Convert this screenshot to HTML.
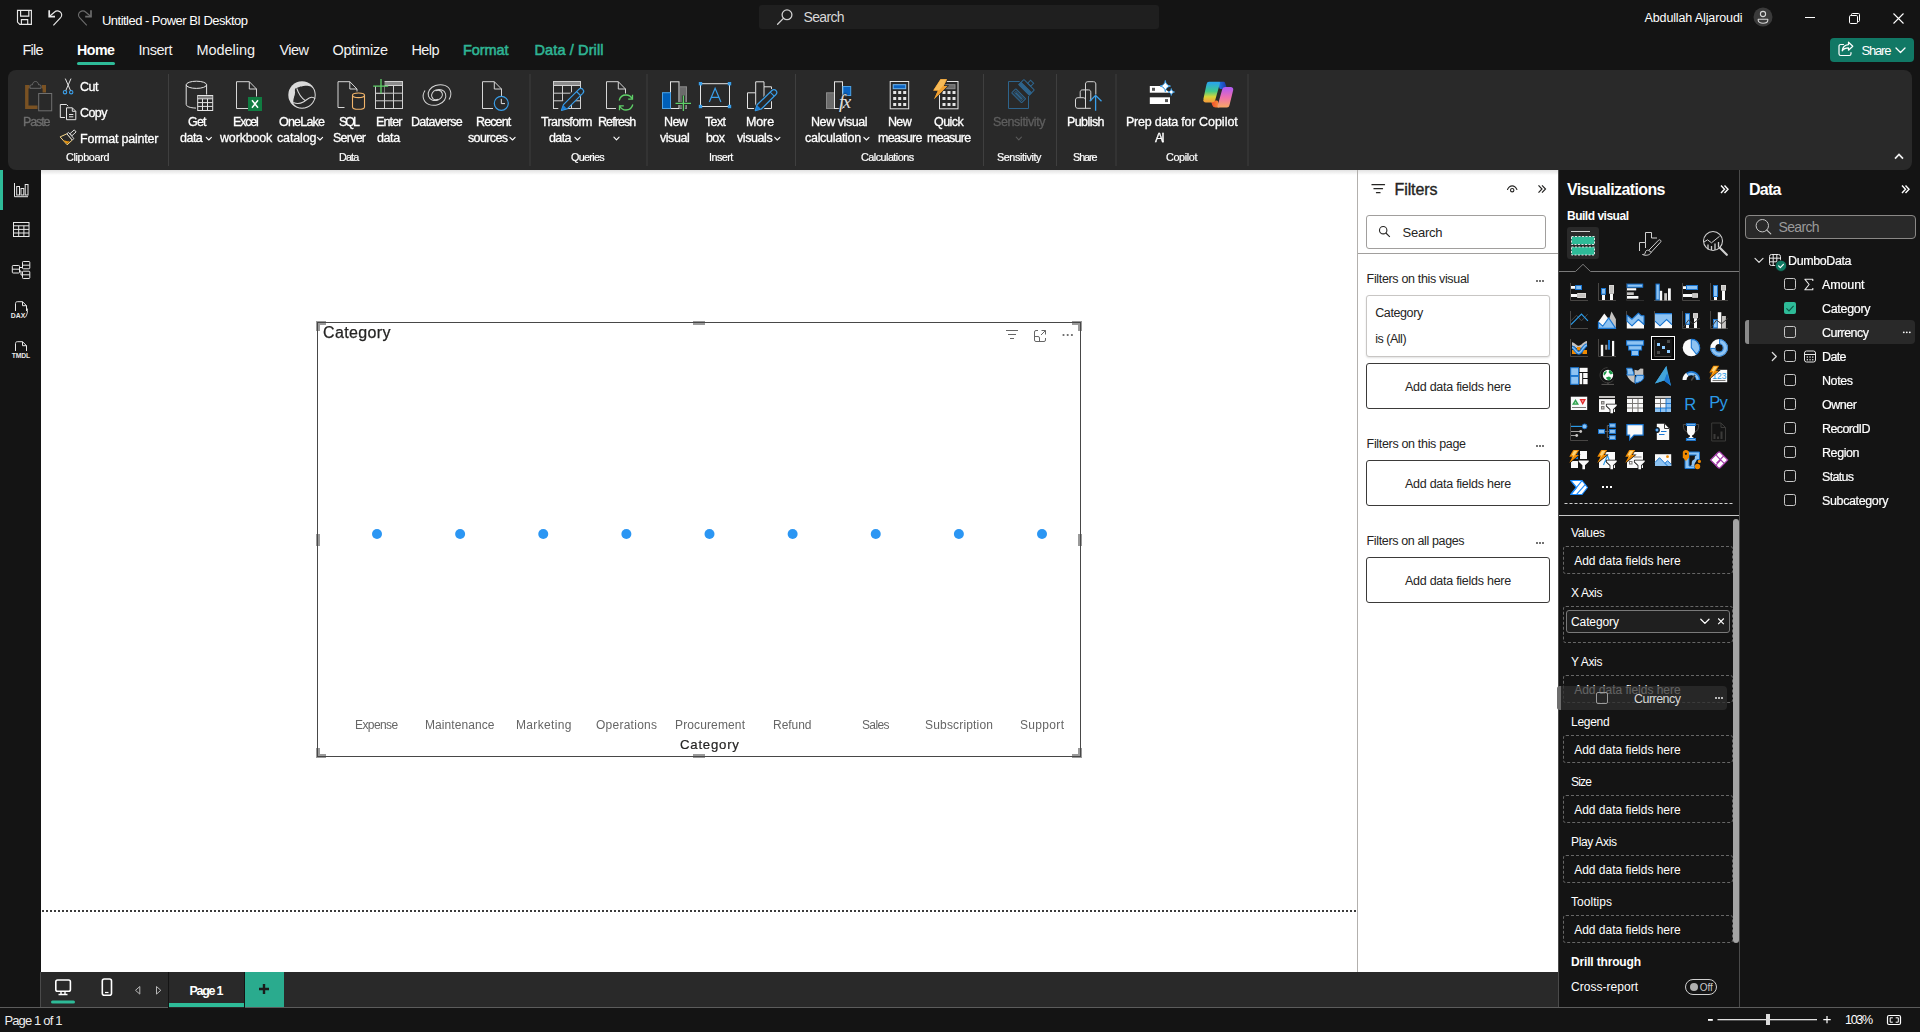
<!DOCTYPE html>
<html>
<head>
<meta charset="utf-8">
<title>Untitled - Power BI Desktop</title>
<style>
*{box-sizing:border-box;margin:0;padding:0}
html,body{width:1920px;height:1032px;overflow:hidden;background:#141414;font-family:"Liberation Sans",sans-serif;color:#fff}
.a{position:absolute}
.t{position:absolute;white-space:nowrap;line-height:1}
svg{position:absolute;overflow:visible}
</style>
</head>
<body>
<!-- p_layout -->
<div class="a" style="left:8px;top:70px;width:1904px;height:100px;background:#292929;border-radius:8px;"></div>
<div class="a" style="left:0px;top:170px;width:41px;height:838px;background:#141414;"></div>
<div class="a" style="left:41px;top:170px;width:1316px;height:802px;background:#fff;"></div>
<div class="a" style="left:1357px;top:170px;width:201px;height:802px;background:#fff;"></div>
<div class="a" style="left:1558px;top:170px;width:182px;height:838px;background:#141414;border-left:1px solid #4a4a4a;border-right:1px solid #4a4a4a;"></div>
<div class="a" style="left:1740px;top:170px;width:180px;height:838px;background:#141414;"></div>
<div class="a" style="left:41px;top:170px;width:1517px;height:5px;background:linear-gradient(#e2e2e2,#fff);"></div>
<div class="a" style="left:1357px;top:170px;width:1px;height:802px;background:#b3b0ad;"></div>
<div class="a" style="left:41px;top:972px;width:1517px;height:36px;background:#292929;"></div>
<div class="a" style="left:0px;top:1007px;width:1920px;height:1px;background:#5c5c5c;"></div>
<!-- p_title -->
<svg style="left:0px;top:0px;" width="110" height="34" viewBox="0 0 110 34"><path d="M17.500 10.400H31.400V24.400H19.800L17.500 22.100z M20.600 10.400V16.100H28.800V10.400 M21.400 24.400V19.600H27.700V24.400" fill="none" stroke="#e8e8e8" stroke-width="1.150" stroke-linejoin="miter"/><path d="M49.200 10.200V16.700H55" fill="none" stroke="#e8e8e8" stroke-width="1.700"/><path d="M49.600 16.300L54.300 12.200C56 10.700 58.300 10.600 60 11.800 62 13.300 62.300 15.800 60.600 17.700L53.400 25.300" fill="none" stroke="#e8e8e8" stroke-width="1.150"/><g transform="translate(140.200,0) scale(-1,1)"><path d="M49.200 10.200V16.700H55" fill="none" stroke="#6c6c6c" stroke-width="1.700"/><path d="M49.600 16.300L54.300 12.200C56 10.700 58.300 10.600 60 11.800 62 13.300 62.300 15.800 60.600 17.700L53.400 25.300" fill="none" stroke="#6c6c6c" stroke-width="1.150"/></g></svg>
<div class="t" style="left:102.00px;top:14.00px;font-size:13px;color:#fff;letter-spacing:-0.526px;">Untitled - Power BI Desktop</div>
<div class="a" style="left:759px;top:5px;width:400px;height:24px;background:#1f1f1f;border-radius:3px;"></div>
<svg style="left:776px;top:8px;" width="18" height="18" viewBox="0 0 18 18"><circle cx="11" cy="6.8" r="4.9" fill="none" stroke="#d0d0d0" stroke-width="1.3"/><path d="M7.4 10.4L1.6 16.2" stroke="#d0d0d0" stroke-width="1.3" stroke-linecap="round"/></svg>
<div class="t" style="left:803.50px;top:10.00px;font-size:14px;color:#d8d8d8;letter-spacing:-0.672px;">Search</div>
<div class="t" style="left:1644.50px;top:12.00px;font-size:12.5px;color:#fff;letter-spacing:-0.122px;">Abdullah Aljaroudi</div>
<svg style="left:1753px;top:7px;" width="20" height="20" viewBox="0 0 20 20"><circle cx="10" cy="10" r="9.5" fill="#3b3b3b"/><circle cx="10" cy="7" r="2.6" fill="none" stroke="#d6d6d6" stroke-width="1.1"/><path d="M5.2 12.2h9.6v1c0 1.800-2 3-4.800 3s-4.800-1.200-4.800-3z" fill="none" stroke="#d6d6d6" stroke-width="1.1" stroke-linejoin="round"/></svg>
<div class="a" style="left:1805px;top:17px;width:10px;height:1px;background:#fff;"></div>
<svg style="left:1848.5px;top:12.7px;" width="11" height="11" viewBox="0 0 11 11"><path d="M2.500 2.500V1.500a1 1 0 0 1 1-1h6a1 1 0 0 1 1 1v6a1 1 0 0 1-1 1h-1" fill="none" stroke="#fff" stroke-width="1"/><rect x=".5" y="2.500" width="8" height="8" rx="1.200" fill="none" stroke="#fff" stroke-width="1"/></svg>
<svg style="left:1892.8px;top:12.7px;" width="11" height="11" viewBox="0 0 11 11"><path d="M.5.5l10 10M10.500.5l-10 10" stroke="#fff" stroke-width="1.100"/></svg>
<div class="t" style="left:22.50px;top:43.00px;font-size:14.5px;color:#f2f2f2;letter-spacing:-0.788px;">File</div>
<div class="t" style="left:77.00px;top:43.00px;font-size:14.2px;color:#fff;letter-spacing:-0.484px;font-weight:bold;">Home</div>
<div class="t" style="left:138.50px;top:43.00px;font-size:14.5px;color:#f2f2f2;letter-spacing:-0.452px;">Insert</div>
<div class="t" style="left:196.50px;top:43.00px;font-size:14.5px;color:#f2f2f2;letter-spacing:-0.048px;">Modeling</div>
<div class="t" style="left:279.50px;top:43.00px;font-size:14.5px;color:#f2f2f2;letter-spacing:-0.556px;">View</div>
<div class="t" style="left:332.50px;top:43.00px;font-size:14.5px;color:#f2f2f2;letter-spacing:-0.243px;">Optimize</div>
<div class="t" style="left:411.50px;top:43.00px;font-size:14.5px;color:#f2f2f2;letter-spacing:-0.607px;">Help</div>
<div class="t" style="left:463.00px;top:43.00px;font-size:14.5px;color:#2fb595;letter-spacing:-0.083px;-webkit-text-stroke:.55px #2fb595;">Format</div>
<div class="t" style="left:534.50px;top:43.00px;font-size:14.5px;color:#2fb595;letter-spacing:0.120px;-webkit-text-stroke:.55px #2fb595;">Data / Drill</div>
<div class="a" style="left:77px;top:62px;width:38px;height:2.5px;background:#2ebb98;border-radius:1.500px;"></div>
<div class="a" style="left:1830px;top:38px;width:84px;height:24px;background:#117865;border-radius:4px;"></div>
<svg style="left:1837px;top:41px;" width="18" height="16" viewBox="0 0 18 16"><path d="M6.500 3.500H3.800A1.800 1.800 0 0 0 2 5.300v7.400a1.800 1.800 0 0 0 1.800 1.800h8.400a1.800 1.800 0 0 0 1.800-1.800V11.500" fill="none" stroke="#fff" stroke-width="1.200" stroke-linecap="round"/><path d="M11.500 1.200l4.300 4-4.300 4V6.800c-3.200 0-5 1-6.300 3 .3-3.300 2.300-5.800 6.300-6.200z" fill="none" stroke="#fff" stroke-width="1.200" stroke-linejoin="round"/></svg>
<div class="t" style="left:1861.50px;top:44.00px;font-size:13px;color:#fff;letter-spacing:-1.173px;">Share</div>
<svg style="left:1895px;top:47px;" width="11" height="7" viewBox="0 0 11 7"><path d="M1 1l4.500 4.500L10 1" fill="none" stroke="#fff" stroke-width="1.300" stroke-linecap="round" stroke-linejoin="round"/></svg>
<!-- p_ribbon -->
<svg style="left:0px;top:70px;" width="1920" height="100" viewBox="0 70 1920 100"><rect x="168" y="74" width="1" height="92" fill="#3f3f3f"/><rect x="529.5" y="74" width="1" height="92" fill="#3f3f3f"/><rect x="646.5" y="74" width="1" height="92" fill="#3f3f3f"/><rect x="795" y="74" width="1" height="92" fill="#3f3f3f"/><rect x="983" y="74" width="1" height="92" fill="#3f3f3f"/><rect x="1056" y="74" width="1" height="92" fill="#3f3f3f"/><rect x="1115.5" y="74" width="1" height="92" fill="#3f3f3f"/><rect x="1247.5" y="74" width="1" height="92" fill="#3f3f3f"/><path d="M29.500 86.700H26.800V107.200H37.500 M41.800 86.700H44.300V92.500" fill="none" stroke="#7a5223" stroke-width="3.400"/><path d="M30 88.300V86.200c0-.8.500-1.400 1.400-1.400h1c.3-1.900 1.300-3.300 3.100-3.300s2.800 1.400 3.100 3.300h1c.9 0 1.400.6 1.400 1.400v2.100z" fill="none" stroke="#6a6a6a" stroke-width="1"/><rect x="38.700" y="93.500" width="13" height="17.300" fill="#292929" stroke="#707070" stroke-width="1"/><path d="M65.300 78.600L70.800 91.200 M71 78.600L65.500 91.200" stroke="#e4e4e4" stroke-width="1" fill="none"/><circle cx="65" cy="92.200" r="1.700" fill="none" stroke="#3a9fea" stroke-width="1.100"/><circle cx="71.200" cy="92.200" r="1.700" fill="none" stroke="#3a9fea" stroke-width="1.100"/><path d="M65 117.500H60.300V104.500H66.500L68.200 106.200" fill="none" stroke="#e4e4e4" stroke-width="1"/><path d="M66.500 107.800H72.300L75.800 111.300V119.700H66.500z M72.300 107.800V111.300H75.800" fill="#292929" stroke="#e4e4e4" stroke-width="1" stroke-linejoin="round"/><path d="M69 114.500h4.300M69 116.800h4.300" stroke="#e4e4e4" stroke-width="1"/><path d="M60.100 136.900L66.900 133.800 72.300 140 67.200 144.800z" fill="#292929" stroke="#f8d88a" stroke-width="1" stroke-linejoin="round"/><path d="M62.800 139.900C65 140.300 67 141.600 69.800 141.300L67.200 144z" fill="#e8930c"/><path d="M70.060 133.660L71.940 135.740 76.140 131.940 74.260 129.860z" fill="#292929" stroke="#dcdcdc" stroke-width="1" stroke-linejoin="round"/><path d="M66.900 133.800L72.300 140 73.900 138.600 68.500 132.400z" fill="#292929" stroke="#dcdcdc" stroke-width="1" stroke-linejoin="round"/><ellipse cx="196.400" cy="84.800" rx="10.200" ry="3.600" fill="none" stroke="#e4e4e4" stroke-width="1"/><path d="M186.200 84.800V104.400c0 2 3.800 3.500 9.800 3.700 M206.600 84.800V94.500" fill="none" stroke="#e4e4e4" stroke-width="1"/><rect x="197.700" y="95.500" width="15" height="15" fill="#292929" stroke="#e4e4e4" stroke-width="1"/><rect x="198.200" y="96" width="14" height="2.300" fill="#7c7c7c"/><path d="M197.700 98.800h15M197.700 102.600h15M197.700 106.400h15M202.500 98.800v11.700M207.500 98.800v11.700" stroke="#e4e4e4" stroke-width="1"/><path d="M248 108.500H236.500V81.700H249.300L256.500 89V96.500 M249.300 81.700V89H256.500" fill="none" stroke="#d6d6d6" stroke-width="1"/><rect x="248" y="97" width="14" height="14" fill="#107c41"/><path d="M252 100.200l6 7.600M258 100.200l-6 7.600" stroke="#fff" stroke-width="1.500"/><circle cx="302" cy="95" r="13.700" fill="#dadada"/><path d="M314.7 95.0 L314.6 96.3 L314.4 97.6 L314.1 98.9 L313.6 100.2 L313.0 101.3 L312.3 102.5 L311.4 103.5 L310.5 104.4 L309.5 105.3 L308.4 106.0 L307.2 106.6 L305.9 107.1 L304.6 107.4 L303.3 107.6 L302.0 107.7 L300.7 107.6 L299.4 107.4 L298.1 107.1 L296.9 106.5 L295.8 105.8 L294.8 104.9 L293.9 104.0 L293.4 102.8 L293.3 101.3 L293.4 100.0 L293.6 98.7 L294.0 97.6 L294.1 96.7 L294.4 95.8 L294.8 95.0 L294.8 94.2 L294.9 93.5 L295.1 92.7 L295.0 91.9 L294.9 90.9 L294.9 89.9 L295.1 88.8 L295.9 88.3 L296.8 87.9 L297.7 87.6 L298.5 87.2 L299.4 86.9 L300.2 86.6 L301.1 86.5 L302.0 86.5 L302.9 86.1 L303.9 85.9 L305.0 85.8 L306.1 85.7 L307.4 85.7 L308.6 85.9 L310.0 86.2 L311.1 86.8 L312.1 87.7 L313.0 88.6 L313.6 89.8 L314.1 91.1 L314.4 92.4 L314.6 93.7z" fill="#292929"/><path d="M296.800 88.300C298.500 93.500 301.300 97.800 305.300 100.600" fill="none" stroke="#dadada" stroke-width="1.100"/><path d="M293.300 102.600C296.500 103.800 300.300 103.700 303.300 102 306.300 100.300 308.500 97.500 311.500 97.300 313 97.200 314.200 97.800 315 98.800" fill="none" stroke="#dadada" stroke-width="1.100"/><path d="M336 107.500H329.500V81.700H341.300L348.500 89V91.500 M341.300 81.700V89H348.500" fill="none" stroke="#d6d6d6" stroke-width="1" transform="translate(8.500,0)"/><ellipse cx="358.500" cy="95.300" rx="6" ry="2.300" fill="#292929" stroke="#f2b56b" stroke-width="1.100"/><path d="M352.500 95.300V107c0 1.300 2.700 2.300 6 2.300s6-1 6-2.300V95.300" fill="none" stroke="#f2b56b" stroke-width="1.100"/><rect x="375.500" y="81.500" width="27" height="27" fill="none" stroke="#d0d0d0" stroke-width="1"/><rect x="384" y="82" width="18" height="3" fill="#8a8a8a"/><path d="M375.500 85.500h27M375.500 93.200h27M375.500 100.800h27M384.500 85.500v23M393.500 85.500v23" stroke="#d0d0d0" stroke-width="1" fill="none"/><rect x="373" y="79" width="11.500" height="14" fill="#292929"/><path d="M375.500 93.200v-7M375.500 93.200h9" stroke="#d0d0d0" stroke-width="1"/><path d="M381 79v14.500M373.200 86.200h15" stroke="#5fd068" stroke-width="1.300"/><g transform="rotate(-18 437 95)" fill="none" stroke="#d6d6d6" stroke-width="1"><path d="M437 99.500c-3.500 0-5.500-2-5.500-4.500s2.500-5 6-5c4.500 0 8 2.700 8 6.500 0 4.500-4.500 8-10 8-7 0-12.500-4-12.500-10 0-3 1.500-5.500 4-7.500"/><path d="M437 90.500c3.500 0 5.500 2 5.500 4.500s-2.500 5-6 5c-4.500 0-8-2.700-8-6.500 0-4.500 4.500-8 10-8 7 0 12.500 4 12.500 10 0 3-1.500 5.500-4 7.500"/></g><path d="M493 108.500H482.500V81.700H494.300L501.500 89V96 M494.300 81.700V89H501.500" fill="none" stroke="#d6d6d6" stroke-width="1"/><circle cx="501.300" cy="103.300" r="7" fill="#292929" stroke="#3a9fea" stroke-width="1.200"/><path d="M501.300 98.800v4.800h3.700" fill="none" stroke="#e4e4e4" stroke-width="1"/><rect x="553.500" y="81.500" width="27" height="27" fill="none" stroke="#d0d0d0" stroke-width="1"/><rect x="554" y="82" width="26" height="3" fill="#8a8a8a"/><path d="M553.500 85.500h27M553.500 93.200h27M553.500 100.800h27M562.500 85.500v23M571.500 85.500v23" stroke="#d0d0d0" stroke-width="1" fill="none"/><path d="M559 111l2.300-6.500 15-15 4.200 4.200-15 15z" fill="#292929" stroke="#292929" stroke-width="3"/><path d="M561.500 110.300l2-5.700 15.300-15.300c1.200-1.200 2.900-1.200 4 0 1.100 1.100 1.100 2.800 0 4L567.500 108.600z" fill="#292929" stroke="#3a9fea" stroke-width="1.200" stroke-linejoin="round"/><path d="M561.500 110.300l1.800-5.200 3.600 3.600z" fill="#1f7fd4"/><path d="M576.500 91.500l4 4" stroke="#3a9fea" stroke-width="1.100"/><path d="M616 108.500H606.500V81.700H618.300L625.500 89V93.500 M618.300 81.700V89H625.500" fill="none" stroke="#d6d6d6" stroke-width="1"/><path d="M619.200 100.500c.8-3.300 3.600-5.500 6.800-5.500 2.700 0 5 1.500 6.200 3.800 M632.800 104.500c-.8 3.300-3.600 5.500-6.800 5.500-2.700 0-5-1.500-6.200-3.800" fill="none" stroke="#5fd068" stroke-width="1.300"/><path d="M632.500 94.800v4.300h-4.300M619.500 110.200v-4.300h4.300" fill="none" stroke="#5fd068" stroke-width="1.300"/><path d="M613.90 137.20l2.6 2.6 2.6-2.6" fill="none" stroke="#fff" stroke-width="1.1" stroke-linecap="round" stroke-linejoin="round"/><rect x="670.500" y="81.800" width="8.500" height="26.700" fill="none" stroke="#e4e4e4" stroke-width="1"/><rect x="679.500" y="86.800" width="7" height="21.700" fill="#6b6b6b" stroke="#8a8a8a" stroke-width="1"/><rect x="662.500" y="92.700" width="8" height="15.800" fill="#005fb8" stroke="#4ba3e8" stroke-width="1"/><path d="M683.400 95.500v15.500M675.500 103.400h15.500" stroke="#292929" stroke-width="3"/><path d="M683.400 95.500v15.500M675.500 103.400h15.500" stroke="#5fd068" stroke-width="1.300"/><rect x="700.500" y="83.700" width="29" height="22.800" fill="none" stroke="#e4e4e4" stroke-width="1"/><rect x="698.8" y="82" width="3.400" height="3.400" fill="#3a9fea"/><rect x="727.8" y="82" width="3.400" height="3.400" fill="#3a9fea"/><rect x="698.8" y="104.8" width="3.400" height="3.400" fill="#3a9fea"/><rect x="727.8" y="104.8" width="3.400" height="3.400" fill="#3a9fea"/><path d="M709.300 102l5.800-13.800 5.800 13.800M711.300 97.300h7.600" fill="none" stroke="#3a9fea" stroke-width="1.200"/><path d="M747.500 108.500V92.800H755.700V81.800H764V86.800H771.500V108.500z M755.700 92.800V108.500 M764 86.800V108.500" fill="none" stroke="#e4e4e4" stroke-width="1"/><path d="M754 112.500l2.500-7 15-15 4.500 4.500-15 15z" fill="#292929" stroke="#292929" stroke-width="2.500"/><path d="M755.300 110.700l1.800-5.900 14.800-14.300c1.200-1.200 2.900-1.200 4 0 1.100 1.100 1.100 2.800 0 4L761.300 109z" fill="#292929" stroke="#3a9fea" stroke-width="1.200" stroke-linejoin="round"/><path d="M755.300 110.700l1.800-5.500 3.800 3.600z" fill="#1f7fd4"/><path d="M770.200 92.200l4 4" stroke="#3a9fea" stroke-width="1.100"/><rect x="826.500" y="92.800" width="8" height="15.700" fill="#6b6b6b" stroke="#8a8a8a" stroke-width="1"/><rect x="834.500" y="81.800" width="8" height="26.700" fill="none" stroke="#e4e4e4" stroke-width="1"/><rect x="843" y="86.500" width="7.700" height="9" fill="#0a63c2" stroke="#4ba3e8" stroke-width="1"/><rect x="840" y="93" width="14" height="17" fill="#292929" opacity="0"/><rect x="890.2" y="81.500" width="18.500" height="27.300" fill="none" stroke="#e4e4e4" stroke-width="1"/><rect x="893.2" y="84.700" width="12.500" height="4" fill="#0a63c2" stroke="#6db6f2" stroke-width="1"/><rect x="893.2" y="91" width="3" height="3" fill="#e4e4e4"/><rect x="893.2" y="97" width="3" height="3" fill="#e4e4e4"/><rect x="893.2" y="103" width="3" height="3" fill="#e4e4e4"/><rect x="898.2" y="91" width="3" height="3" fill="#e4e4e4"/><rect x="898.2" y="97" width="3" height="3" fill="#e4e4e4"/><rect x="898.2" y="103" width="3" height="3" fill="#e4e4e4"/><rect x="903.2" y="91" width="3" height="3" fill="#e4e4e4"/><rect x="903.2" y="97" width="3" height="3" fill="#e4e4e4"/><rect x="903.2" y="103" width="3" height="3" fill="#e4e4e4"/><rect x="939.5" y="81.500" width="18.500" height="27.300" fill="none" stroke="#e4e4e4" stroke-width="1"/><rect x="942.5" y="84.700" width="12.500" height="4" fill="#6b6b6b" stroke="#8a8a8a" stroke-width="1"/><rect x="942.5" y="91" width="3" height="3" fill="#e4e4e4"/><rect x="942.5" y="97" width="3" height="3" fill="#e4e4e4"/><rect x="942.5" y="103" width="3" height="3" fill="#e4e4e4"/><rect x="947.5" y="91" width="3" height="3" fill="#e4e4e4"/><rect x="947.5" y="97" width="3" height="3" fill="#e4e4e4"/><rect x="947.5" y="103" width="3" height="3" fill="#e4e4e4"/><rect x="952.5" y="91" width="3" height="3" fill="#e4e4e4"/><rect x="952.5" y="97" width="3" height="3" fill="#e4e4e4"/><rect x="952.5" y="103" width="3" height="3" fill="#e4e4e4"/><path d="M940.500 79.200h6.500l-3.300 6.800h3.700L934 99.300l4-8.800h-4.800z" fill="#f0a030" stroke="#292929" stroke-width="1.600" paint-order="stroke"/><path d="M940.500 79.200h6.500l-3.300 6.800h3.700L934 99.300l4-8.800h-4.800z" fill="#f0a030"/><path d="M940.700 79.600h5.500l-2.600 5.600-4.500 5h-5.200z" fill="#fcd27a" opacity=".55"/><path d="M1019.700 81.500H1008.500V108.500H1028.500V96" fill="none" stroke="#2e648c" stroke-width="1"/><g transform="translate(1018.700,95.800) rotate(45)" fill="none" stroke="#2e648c" stroke-width="1"><rect x="-7" y="-2.900" width="14" height="5.800" rx=".6"/><rect x="-4.600" y="-.9" width="9.200" height="1.800" fill="#2e648c" stroke="none"/><rect x="-5.400" y="-1.700" width="10.800" height="3.400" stroke-width=".7"/></g><g transform="translate(1026.600,87.300) rotate(45)" fill="none" stroke="#2e648c" stroke-width="1"><rect x="-7.400" y="-3.600" width="14.800" height="7.200" rx=".6"/><rect x="-7.400" y=".4" width="14.800" height="3.200" fill="#2e648c"/><rect x="-2.200" y="-7.800" width="4.400" height="4.200"/></g><path d="M1016.20 137.20l2.6 2.6 2.6-2.6" fill="none" stroke="#5a5a5a" stroke-width="1.1" stroke-linecap="round" stroke-linejoin="round"/><path d="M1085.500 108.300V84c0-1.400.9-2.300 2.300-2.300h5.700c1.400 0 2.300.9 2.300 2.300V94.500" fill="none" stroke="#d6d6d6" stroke-width="1"/><path d="M1080.200 97.500V92.200c0-1.400.9-2.300 2.300-2.300h6c1.400 0 2.300.9 2.300 2.300V101" fill="none" stroke="#d6d6d6" stroke-width="1"/><path d="M1090.800 108.300H1077.800c-1.400 0-2.300-.9-2.300-2.300V100c0-1.400.9-2.300 2.300-2.300h5.400c1.400 0 2.300.9 2.300 2.300" fill="none" stroke="#d6d6d6" stroke-width="1"/><path d="M1095.600 110.800V95.500M1089.700 101.300l5.900-5.900 5.900 5.900" fill="none" stroke="#3a9fea" stroke-width="1.300"/><rect x="1149.800" y="86" width="20.200" height="6.700" fill="#fff"/><rect x="1149.800" y="97.300" width="20.200" height="6.700" fill="#fff"/><rect x="1152" y="87.800" width="3" height="3" fill="#555"/><rect x="1165" y="99.100" width="3" height="3" fill="#555"/><path d="M1160.500 85.500l11 8.500v-9z" fill="#292929"/><path d="M1165.300 80.500c.5 3.300 1.800 4.800 5.200 5.600-3.400.8-4.700 2.300-5.200 5.600-.5-3.300-1.800-4.800-5.200-5.600 3.400-.8 4.700-2.300 5.200-5.600z" fill="#fff" stroke="#3a9fea" stroke-width="1"/><path d="M1171.300 88.600c.3 2 1.100 2.900 3.200 3.400-2.100.5-2.900 1.400-3.200 3.400-.3-2-1.100-2.900-3.200-3.400 2.100-.5 2.900-1.400 3.200-3.400z" fill="#fff" stroke="#3a9fea" stroke-width=".9"/><defs>
<linearGradient id="cg1" x1="0" y1="0" x2="0" y2="1"><stop offset="0" stop-color="#2aa6e8"/><stop offset=".45" stop-color="#41c98a"/><stop offset=".75" stop-color="#d7d43a"/><stop offset="1" stop-color="#f2a23a"/></linearGradient>
<linearGradient id="cg2" x1="0" y1="0" x2="0" y2="1"><stop offset="0" stop-color="#b45cf0"/><stop offset=".5" stop-color="#ee6fb0"/><stop offset="1" stop-color="#f6a26a"/></linearGradient>
<linearGradient id="cg3" x1="0" y1="0" x2="1" y2="0"><stop offset="0" stop-color="#1f6fe0"/><stop offset="1" stop-color="#1c3fb0"/></linearGradient>
<linearGradient id="cg4" x1="0" y1="0" x2="1" y2="0"><stop offset="0" stop-color="#f0562e"/><stop offset="1" stop-color="#f78a3a"/></linearGradient>
</defs><path d="M1219.500 83h4.300l1.700 4.800h-5z" fill="url(#cg3)" stroke="url(#cg3)" stroke-width="2.400" stroke-linejoin="round"/><path d="M1212.500 101.700h4.300l1.700 4.700h-2.800c-1.200 0-2-.6-2.400-1.800z" fill="url(#cg4)" stroke="url(#cg4)" stroke-width="2.400" stroke-linejoin="round"/><path d="M1209 83h9.800l-4.700 16.800c-.3 1-1 1.500-2 1.500h-6.300c-1 0-1.600-.8-1.300-1.800l3.200-15c.2-1 .6-1.500 1.300-1.500z" fill="url(#cg1)" stroke="url(#cg1)" stroke-width="2.400" stroke-linejoin="round"/><path d="M1227 106.400h-8.300l4.700-16.800c.3-1 1-1.500 2-1.500h5.300c1 0 1.600.8 1.300 1.800l-3.700 15c-.2 1-.6 1.500-1.300 1.500z" fill="url(#cg2)" stroke="url(#cg2)" stroke-width="2.400" stroke-linejoin="round"/></svg>
<div class="t" style="left:839px;top:91.500px;font-family:'Liberation Serif',serif;font-style:italic;font-size:19px;color:#e0e0e0;letter-spacing:-1.500px;text-shadow:0 0 1.500px #292929,0 0 1.500px #292929,0 0 2px #292929">fx</div>
<div class="t" style="left:22.50px;top:116.00px;font-size:12.5px;color:#6e6e6e;letter-spacing:-1.116px;will-change:transform;-webkit-text-stroke:.3px #6e6e6e;">Paste</div>
<div class="t" style="left:80.00px;top:81.00px;font-size:12.5px;color:#fff;letter-spacing:-0.477px;will-change:transform;-webkit-text-stroke:.3px #fff;">Cut</div>
<div class="t" style="left:80.00px;top:107.00px;font-size:12.5px;color:#fff;letter-spacing:-0.561px;will-change:transform;-webkit-text-stroke:.3px #fff;">Copy</div>
<div class="t" style="left:80.00px;top:133.00px;font-size:12.5px;color:#fff;letter-spacing:-0.230px;will-change:transform;-webkit-text-stroke:.3px #fff;">Format painter</div>
<div class="t" style="left:188.00px;top:116.00px;font-size:12.5px;color:#fff;letter-spacing:-0.824px;will-change:transform;-webkit-text-stroke:.3px #fff;">Get</div>
<div class="t" style="left:179.70px;top:132.00px;font-size:12.5px;color:#fff;letter-spacing:-0.511px;will-change:transform;-webkit-text-stroke:.3px #fff;">data</div>
<div class="t" style="left:233.00px;top:116.00px;font-size:12.5px;color:#fff;letter-spacing:-1.192px;will-change:transform;-webkit-text-stroke:.3px #fff;">Excel</div>
<div class="t" style="left:219.70px;top:132.00px;font-size:12.5px;color:#fff;letter-spacing:-0.172px;will-change:transform;-webkit-text-stroke:.3px #fff;">workbook</div>
<div class="t" style="left:278.50px;top:116.00px;font-size:12.5px;color:#fff;letter-spacing:-0.790px;will-change:transform;-webkit-text-stroke:.3px #fff;">OneLake</div>
<div class="t" style="left:276.50px;top:132.00px;font-size:12.5px;color:#fff;letter-spacing:-0.135px;will-change:transform;-webkit-text-stroke:.3px #fff;">catalog</div>
<div class="t" style="left:338.50px;top:116.00px;font-size:12.5px;color:#fff;letter-spacing:-2.006px;will-change:transform;-webkit-text-stroke:.3px #fff;">SQL</div>
<div class="t" style="left:332.50px;top:132.00px;font-size:12.5px;color:#fff;letter-spacing:-0.764px;will-change:transform;-webkit-text-stroke:.3px #fff;">Server</div>
<div class="t" style="left:376.00px;top:116.00px;font-size:12.5px;color:#fff;letter-spacing:-0.845px;will-change:transform;-webkit-text-stroke:.3px #fff;">Enter</div>
<div class="t" style="left:377.20px;top:132.00px;font-size:12.5px;color:#fff;letter-spacing:-0.411px;will-change:transform;-webkit-text-stroke:.3px #fff;">data</div>
<div class="t" style="left:411.30px;top:116.00px;font-size:12.5px;color:#fff;letter-spacing:-0.660px;will-change:transform;-webkit-text-stroke:.3px #fff;">Dataverse</div>
<div class="t" style="left:476.00px;top:116.00px;font-size:12.5px;color:#fff;letter-spacing:-0.882px;will-change:transform;-webkit-text-stroke:.3px #fff;">Recent</div>
<div class="t" style="left:467.50px;top:132.00px;font-size:12.5px;color:#fff;letter-spacing:-0.629px;will-change:transform;-webkit-text-stroke:.3px #fff;">sources</div>
<div class="t" style="left:541.00px;top:116.00px;font-size:12.5px;color:#fff;letter-spacing:-0.625px;will-change:transform;-webkit-text-stroke:.3px #fff;">Transform</div>
<div class="t" style="left:549.20px;top:132.00px;font-size:12.5px;color:#fff;letter-spacing:-0.611px;will-change:transform;-webkit-text-stroke:.3px #fff;">data</div>
<div class="t" style="left:597.50px;top:116.00px;font-size:12.5px;color:#fff;letter-spacing:-0.912px;will-change:transform;-webkit-text-stroke:.3px #fff;">Refresh</div>
<div class="t" style="left:663.50px;top:116.00px;font-size:12.5px;color:#fff;letter-spacing:-0.604px;will-change:transform;-webkit-text-stroke:.3px #fff;">New</div>
<div class="t" style="left:660.30px;top:132.00px;font-size:12.5px;color:#fff;letter-spacing:-0.452px;will-change:transform;-webkit-text-stroke:.3px #fff;">visual</div>
<div class="t" style="left:704.70px;top:116.00px;font-size:12.5px;color:#fff;letter-spacing:-0.642px;will-change:transform;-webkit-text-stroke:.3px #fff;">Text</div>
<div class="t" style="left:706.00px;top:132.00px;font-size:12.5px;color:#fff;letter-spacing:-0.578px;will-change:transform;-webkit-text-stroke:.3px #fff;">box</div>
<div class="t" style="left:746.20px;top:116.00px;font-size:12.5px;color:#fff;letter-spacing:-0.128px;will-change:transform;-webkit-text-stroke:.3px #fff;">More</div>
<div class="t" style="left:736.70px;top:132.00px;font-size:12.5px;color:#fff;letter-spacing:-0.418px;will-change:transform;-webkit-text-stroke:.3px #fff;">visuals</div>
<div class="t" style="left:810.80px;top:116.00px;font-size:12.5px;color:#fff;letter-spacing:-0.427px;will-change:transform;-webkit-text-stroke:.3px #fff;">New visual</div>
<div class="t" style="left:804.80px;top:132.00px;font-size:12.5px;color:#fff;letter-spacing:-0.287px;will-change:transform;-webkit-text-stroke:.3px #fff;">calculation</div>
<div class="t" style="left:888.00px;top:116.00px;font-size:12.5px;color:#fff;letter-spacing:-0.654px;will-change:transform;-webkit-text-stroke:.3px #fff;">New</div>
<div class="t" style="left:878.00px;top:132.00px;font-size:12.5px;color:#fff;letter-spacing:-0.707px;will-change:transform;-webkit-text-stroke:.3px #fff;">measure</div>
<div class="t" style="left:934.30px;top:116.00px;font-size:12.5px;color:#fff;letter-spacing:-0.563px;will-change:transform;-webkit-text-stroke:.3px #fff;">Quick</div>
<div class="t" style="left:926.80px;top:132.00px;font-size:12.5px;color:#fff;letter-spacing:-0.740px;will-change:transform;-webkit-text-stroke:.3px #fff;">measure</div>
<div class="t" style="left:993.00px;top:116.00px;font-size:12.5px;color:#5e5e5e;letter-spacing:-0.377px;will-change:transform;-webkit-text-stroke:.3px #5e5e5e;">Sensitivity</div>
<div class="t" style="left:1067.00px;top:116.00px;font-size:12.5px;color:#fff;letter-spacing:-0.583px;will-change:transform;-webkit-text-stroke:.3px #fff;">Publish</div>
<div class="t" style="left:1125.50px;top:116.00px;font-size:12.5px;color:#fff;letter-spacing:-0.248px;will-change:transform;-webkit-text-stroke:.3px #fff;">Prep data for</div>
<div class="t" style="left:1198.70px;top:116.00px;font-size:12.5px;color:#fff;letter-spacing:-0.019px;will-change:transform;-webkit-text-stroke:.3px #fff;">Copilot</div>
<div class="t" style="left:1155.20px;top:132.00px;font-size:12.5px;color:#fff;letter-spacing:-2.009px;will-change:transform;-webkit-text-stroke:.3px #fff;">AI</div>
<svg style="left:0px;top:70px;" width="1920" height="100" viewBox="0 70 1920 100"><path d="M206.20 137.40l2.6 2.6 2.6-2.6" fill="none" stroke="#fff" stroke-width="1.1" stroke-linecap="round" stroke-linejoin="round"/><path d="M317.40 137.40l2.6 2.6 2.6-2.6" fill="none" stroke="#fff" stroke-width="1.1" stroke-linecap="round" stroke-linejoin="round"/><path d="M509.90 137.40l2.6 2.6 2.6-2.6" fill="none" stroke="#fff" stroke-width="1.1" stroke-linecap="round" stroke-linejoin="round"/><path d="M574.90 137.40l2.6 2.6 2.6-2.6" fill="none" stroke="#fff" stroke-width="1.1" stroke-linecap="round" stroke-linejoin="round"/><path d="M774.70 137.40l2.6 2.6 2.6-2.6" fill="none" stroke="#fff" stroke-width="1.1" stroke-linecap="round" stroke-linejoin="round"/><path d="M863.80 137.40l2.6 2.6 2.6-2.6" fill="none" stroke="#fff" stroke-width="1.1" stroke-linecap="round" stroke-linejoin="round"/></svg>
<div class="t" style="left:66.30px;top:152.00px;font-size:10.8px;color:#fff;letter-spacing:-0.354px;will-change:transform;-webkit-text-stroke:.2px #fff;">Clipboard</div>
<div class="t" style="left:339.20px;top:152.00px;font-size:10.8px;color:#fff;letter-spacing:-0.839px;will-change:transform;-webkit-text-stroke:.2px #fff;">Data</div>
<div class="t" style="left:571.30px;top:152.00px;font-size:10.8px;color:#fff;letter-spacing:-0.687px;will-change:transform;-webkit-text-stroke:.2px #fff;">Queries</div>
<div class="t" style="left:708.60px;top:152.00px;font-size:10.8px;color:#fff;letter-spacing:-0.563px;will-change:transform;-webkit-text-stroke:.2px #fff;">Insert</div>
<div class="t" style="left:861.40px;top:152.00px;font-size:10.8px;color:#fff;letter-spacing:-0.521px;will-change:transform;-webkit-text-stroke:.2px #fff;">Calculations</div>
<div class="t" style="left:996.80px;top:152.00px;font-size:10.8px;color:#fff;letter-spacing:-0.422px;will-change:transform;-webkit-text-stroke:.2px #fff;">Sensitivity</div>
<div class="t" style="left:1073.20px;top:152.00px;font-size:10.8px;color:#fff;letter-spacing:-1.056px;will-change:transform;-webkit-text-stroke:.2px #fff;">Share</div>
<div class="t" style="left:1166.00px;top:152.00px;font-size:10.8px;color:#fff;letter-spacing:-0.353px;will-change:transform;-webkit-text-stroke:.2px #fff;">Copilot</div>
<svg style="left:1893.8px;top:152.6px;" width="10" height="7" viewBox="0 0 10 7"><path d="M1 5.700l4-4.200 4 4.200" fill="none" stroke="#f0f0f0" stroke-width="1.700" stroke-linecap="butt" stroke-linejoin="miter"/></svg>
<!-- p_nav -->
<div class="a" style="left:0px;top:170px;width:3px;height:40px;background:#2ebb98;"></div>
<svg style="left:0px;top:170px;" width="41" height="200" viewBox="0 170 41 200"><path d="M14.500 183v13.700h13.500" fill="none" stroke="#e8e8e8" stroke-width="1"/><rect x="16.700" y="186.500" width="2.800" height="8.500" fill="none" stroke="#e8e8e8" stroke-width="1"/><rect x="21" y="188.500" width="2.800" height="6.500" fill="none" stroke="#e8e8e8" stroke-width="1"/><rect x="25.200" y="184.500" width="2.800" height="10.500" fill="none" stroke="#e8e8e8" stroke-width="1"/><rect x="13.500" y="222.500" width="15.500" height="14" fill="none" stroke="#e8e8e8" stroke-width="1"/><path d="M13.500 225.800h15.500M13.500 229.400h15.500M13.500 233h15.500M18.700 225.800v10.700M23.900 225.800v10.700" stroke="#e8e8e8" stroke-width="1" fill="none"/><rect x="12.300" y="265.500" width="7.200" height="7.500" rx=".8" fill="none" stroke="#e8e8e8" stroke-width="1"/><path d="M12.300 269.200h7.200" stroke="#e8e8e8" stroke-width="1"/><rect x="22.500" y="261.500" width="7.300" height="7.300" rx=".8" fill="none" stroke="#e8e8e8" stroke-width="1"/><path d="M22.500 265.200h7.300" stroke="#e8e8e8" stroke-width="1"/><rect x="22.500" y="271.200" width="7.300" height="7.300" rx=".8" fill="none" stroke="#e8e8e8" stroke-width="1"/><path d="M22.500 274.800h7.300" stroke="#e8e8e8" stroke-width="1"/><path d="M19.500 267.500h3M19.500 271h1.500v4h1.500" fill="none" stroke="#e8e8e8" stroke-width="1"/><path d="M15.500 311v-7.500c0-1.100.7-1.800 1.800-1.800h5.200l4 4v5.300 M22.500 301.700v4h4" fill="none" stroke="#e8e8e8" stroke-width="1"/><path d="M27.300 308.500c.6 3-.2 6-1.800 8.600" fill="none" stroke="#e8e8e8" stroke-width=".9"/><path d="M15.500 351v-7.500c0-1.100.7-1.800 1.800-1.800h5.200l4 4v5.300 M22.500 341.700v4h4" fill="none" stroke="#e8e8e8" stroke-width="1"/></svg>
<div class="t" style="left:10.80px;top:313.00px;font-size:6.8px;color:#e8e8e8;letter-spacing:0.070px;font-weight:bold;">DAX</div>
<div class="t" style="left:11.80px;top:353.00px;font-size:6.8px;color:#e8e8e8;letter-spacing:-0.162px;font-weight:bold;">TMDL</div>
<!-- p_canvas -->
<div class="a" style="left:41px;top:910px;width:1316px;height:2px;background:repeating-linear-gradient(90deg,#fff 0 1px,#3c3c3c 1px 3px,#fff 3px 4px);"></div>
<svg style="left:300px;top:310px;" width="800" height="460" viewBox="300 310 800 460"><rect x="316" y="321" width="10" height="4" fill="#9a9a9a"/><rect x="316" y="321" width="4" height="10" fill="#9a9a9a"/><rect x="1072" y="321" width="10" height="4" fill="#9a9a9a"/><rect x="1078" y="321" width="4" height="10" fill="#9a9a9a"/><rect x="316" y="754" width="10" height="4" fill="#9a9a9a"/><rect x="316" y="748" width="4" height="10" fill="#9a9a9a"/><rect x="1072" y="754" width="10" height="4" fill="#9a9a9a"/><rect x="1078" y="748" width="4" height="10" fill="#9a9a9a"/><rect x="693" y="321" width="12" height="4" fill="#9a9a9a"/><rect x="693" y="754" width="12" height="4" fill="#9a9a9a"/><rect x="316" y="534" width="4" height="12" fill="#9a9a9a"/><rect x="1078" y="534" width="4" height="12" fill="#9a9a9a"/><rect x="317.500" y="322.500" width="763" height="434" fill="none" stroke="#484848" stroke-width="1"/><path d="M1006 330.500h12M1008 334.500h8M1010 338.500h4" stroke="#666" stroke-width="1"/><path d="M1038 330.500h-2a1.500 1.500 0 0 0-1.500 1.500v8a1.500 1.500 0 0 0 1.500 1.500h8a1.500 1.500 0 0 0 1.500-1.500v-2 M1034.500 336.500h3.500a1.500 1.500 0 0 1 1.500 1.500v3.500 M1041.500 330.500h4v4 M1045.500 330.500l-4.500 4.500" fill="none" stroke="#666" stroke-width="1"/><circle cx="1063.5" cy="335" r="1.100" fill="#666"/><circle cx="1067.7" cy="335" r="1.100" fill="#666"/><circle cx="1071.9" cy="335" r="1.100" fill="#666"/><circle cx="377" cy="534" r="5" fill="#2b96f3"/><circle cx="460.125" cy="534" r="5" fill="#2b96f3"/><circle cx="543.25" cy="534" r="5" fill="#2b96f3"/><circle cx="626.375" cy="534" r="5" fill="#2b96f3"/><circle cx="709.5" cy="534" r="5" fill="#2b96f3"/><circle cx="792.625" cy="534" r="5" fill="#2b96f3"/><circle cx="875.75" cy="534" r="5" fill="#2b96f3"/><circle cx="958.875" cy="534" r="5" fill="#2b96f3"/><circle cx="1042" cy="534" r="5" fill="#2b96f3"/></svg>
<div class="t" style="left:323.00px;top:325.00px;font-size:16px;color:#252423;letter-spacing:0.368px;-webkit-text-stroke:.25px #252423;will-change:transform;">Category</div>
<div class="t" style="left:355.40px;top:719.00px;font-size:12px;color:#666;letter-spacing:-0.585px;will-change:transform;">Expense</div>
<div class="t" style="left:425.38px;top:719.00px;font-size:12px;color:#666;letter-spacing:0.077px;will-change:transform;">Maintenance</div>
<div class="t" style="left:515.50px;top:719.00px;font-size:12px;color:#666;letter-spacing:0.350px;will-change:transform;">Marketing</div>
<div class="t" style="left:595.88px;top:719.00px;font-size:12px;color:#666;letter-spacing:0.254px;will-change:transform;">Operations</div>
<div class="t" style="left:674.50px;top:719.00px;font-size:12px;color:#666;letter-spacing:0.129px;will-change:transform;">Procurement</div>
<div class="t" style="left:773.38px;top:719.00px;font-size:12px;color:#666;letter-spacing:-0.041px;will-change:transform;">Refund</div>
<div class="t" style="left:862.00px;top:719.00px;font-size:12px;color:#666;letter-spacing:-0.631px;will-change:transform;">Sales</div>
<div class="t" style="left:924.88px;top:719.00px;font-size:12px;color:#666;letter-spacing:0.177px;will-change:transform;">Subscription</div>
<div class="t" style="left:1020.00px;top:719.00px;font-size:12px;color:#666;letter-spacing:0.327px;will-change:transform;">Support</div>
<div class="t" style="left:680.00px;top:738.00px;font-size:13.2px;color:#252423;letter-spacing:0.778px;-webkit-text-stroke:.2px #252423;will-change:transform;">Category</div>
<!-- p_filters -->
<div class="t" style="left:1394.50px;top:182.00px;font-size:16px;color:#252423;letter-spacing:-0.092px;-webkit-text-stroke:.35px #252423;">Filters</div>
<div class="a" style="left:1366px;top:215px;width:180px;height:34px;background:#fff;border:1px solid #a19f9d;border-radius:3px;"></div>
<div class="t" style="left:1402.50px;top:226.00px;font-size:13px;color:#252423;letter-spacing:-0.238px;">Search</div>
<div class="a" style="left:1358px;top:253px;width:200px;height:1px;background:#a19f9d;"></div>
<svg style="left:1358px;top:170px;" width="200" height="100" viewBox="1358 170 200 100"><path d="M1372 184.700h12.500M1374 188.700h8.500M1376.500 192.700h3.500" stroke="#252423" stroke-width="1.300" stroke-linecap="round"/><path d="M1507.500 189.500c1.200-2.400 2.800-3.600 4.700-3.600s3.500 1.200 4.700 3.600" fill="none" stroke="#252423" stroke-width="1.100" stroke-linecap="round"/><circle cx="1512.200" cy="190.200" r="1.700" fill="none" stroke="#252423" stroke-width="1.100"/><path d="M1538.500 185.300l3.500 3.700-3.500 3.700M1542 185.300l3.500 3.700-3.500 3.700" fill="none" stroke="#252423" stroke-width="1.200"/><circle cx="1383.200" cy="230.200" r="3.700" fill="none" stroke="#252423" stroke-width="1.100"/><path d="M1385.900 233l3.900 3.900" stroke="#252423" stroke-width="1.100"/></svg>
<div class="t" style="left:1366.60px;top:273.00px;font-size:12.5px;color:#252423;letter-spacing:-0.337px;">Filters on this visual</div>
<div class="a" style="left:1536px;top:280px;width:1.6px;height:1.6px;background:#444;border-radius:1px;"></div>
<div class="a" style="left:1539px;top:280px;width:1.6px;height:1.6px;background:#444;border-radius:1px;"></div>
<div class="a" style="left:1542px;top:280px;width:1.6px;height:1.6px;background:#444;border-radius:1px;"></div>
<div class="a" style="left:1366px;top:295px;width:184px;height:62px;background:#fff;border:1px solid #c8c6c4;border-radius:3px;box-shadow:0 1px 2px rgba(0,0,0,.12);"></div>
<div class="t" style="left:1375.20px;top:307.00px;font-size:12.5px;color:#252423;letter-spacing:-0.390px;">Category</div>
<div class="t" style="left:1375.20px;top:333.00px;font-size:12.5px;color:#252423;letter-spacing:-0.474px;">is (All)</div>
<div class="a" style="left:1366px;top:363px;width:184px;height:46px;background:#fff;border:1px solid #3b3a39;border-radius:3px;"></div>
<div class="t" style="left:1405.00px;top:381.00px;font-size:12.5px;color:#252423;letter-spacing:-0.263px;">Add data fields here</div>
<div class="t" style="left:1366.60px;top:438.00px;font-size:12.5px;color:#252423;letter-spacing:-0.327px;">Filters on this page</div>
<div class="a" style="left:1536px;top:445px;width:1.6px;height:1.6px;background:#444;border-radius:1px;"></div>
<div class="a" style="left:1539px;top:445px;width:1.6px;height:1.6px;background:#444;border-radius:1px;"></div>
<div class="a" style="left:1542px;top:445px;width:1.6px;height:1.6px;background:#444;border-radius:1px;"></div>
<div class="a" style="left:1366px;top:460px;width:184px;height:46px;background:#fff;border:1px solid #3b3a39;border-radius:3px;"></div>
<div class="t" style="left:1405.00px;top:478.00px;font-size:12.5px;color:#252423;letter-spacing:-0.263px;">Add data fields here</div>
<div class="t" style="left:1366.60px;top:535.00px;font-size:12.5px;color:#252423;letter-spacing:-0.365px;">Filters on all pages</div>
<div class="a" style="left:1536px;top:542px;width:1.6px;height:1.6px;background:#444;border-radius:1px;"></div>
<div class="a" style="left:1539px;top:542px;width:1.6px;height:1.6px;background:#444;border-radius:1px;"></div>
<div class="a" style="left:1542px;top:542px;width:1.6px;height:1.6px;background:#444;border-radius:1px;"></div>
<div class="a" style="left:1366px;top:557px;width:184px;height:46px;background:#fff;border:1px solid #3b3a39;border-radius:3px;"></div>
<div class="t" style="left:1405.00px;top:575.00px;font-size:12.5px;color:#252423;letter-spacing:-0.263px;">Add data fields here</div>
<!-- p_vis -->
<div class="t" style="left:1567.00px;top:182.00px;font-size:16px;color:#fff;letter-spacing:-0.608px;font-weight:bold;">Visualizations</div>
<div class="t" style="left:1567.00px;top:210.00px;font-size:12px;color:#fff;letter-spacing:-0.488px;font-weight:bold;">Build visual</div>
<div class="a" style="left:1567px;top:227px;width:32px;height:32px;background:#292929;border-radius:3px;"></div>
<svg style="left:1558px;top:170px;" width="182" height="360" viewBox="1558 170 182 360"><path d="M1721 185.500l3.500 3.700-3.500 3.700M1724.500 185.500l3.500 3.700-3.500 3.700" fill="none" stroke="#fff" stroke-width="1.400"/><path d="M1571 231.500h19" stroke="#d0d0d0" stroke-width="1"/><rect x="1571.500" y="236.5" width="23" height="8" fill="#2ebb98" stroke="#e0e0e0" stroke-width="1" stroke-dasharray="2 1.500"/><rect x="1571.500" y="247" width="23" height="8" fill="#2ebb98" stroke="#e0e0e0" stroke-width="1" stroke-dasharray="2 1.500"/><path d="M1639.500 251V242.500H1645.500V232.500H1651.500V238H1657" fill="none" stroke="#d0d0d0" stroke-width="1"/><path d="M1645.500 242.500V248" stroke="#d0d0d0" stroke-width="1"/><path d="M1660.500 240.200c.6.600.6 1.400 0 2L1651 252.500l-2.200-2.200 9.700-10.100c.6-.6 1.400-.6 2 0z" fill="#141414" stroke="#d0d0d0" stroke-width="1"/><path d="M1648.800 250.300c-2-.6-3.800.8-3.500 2.700-.3 1-1.300 1.500-2.800 1.500 3 1.500 7.500.8 8.500-2z" fill="#141414" stroke="#d0d0d0" stroke-width="1"/><circle cx="1713" cy="241" r="9.500" fill="none" stroke="#d0d0d0" stroke-width="1.100"/><path d="M1719.800 247.800l7 7" stroke="#d0d0d0" stroke-width="2.200" stroke-linecap="round"/><path d="M1704 242l3.500-2.200 4 3 8-6.500" fill="none" stroke="#d0d0d0" stroke-width="1"/><path d="M1708 244.500v5M1711.500 246v4M1715 243.500v6.500M1718.500 242v5.500" stroke="#d0d0d0" stroke-width="1.300"/><path d="M1559 271.500H1575.500L1583 264.300 1590.500 271.500H1739" fill="none" stroke="#7a7a7a" stroke-width="1"/><path d="M1564.500 503.500H1733" stroke="#d0d0d0" stroke-width="1" stroke-dasharray="3 2"/><path d="M1559 515.500H1739" stroke="#c8c8c8" stroke-width="1"/><rect x="1602" y="486" width="2" height="2" fill="#fff"/><rect x="1606" y="486" width="2" height="2" fill="#fff"/><rect x="1610" y="486" width="2" height="2" fill="#fff"/></svg>
<svg style="left:1558px;top:270px;" width="182" height="240" viewBox="1558 270 182 240"><g transform="translate(1570,283)"><path d="M.5 0V17.500H18" fill="none" stroke="#484644" stroke-width="1"/><rect x="1" y="3" width="4.2" height="2.8" fill="#fafafa"/><rect x="5.7" y="2.5" width="5.8" height="4" fill="#8ec3f2" stroke="#1976d2" stroke-width="1"/><rect x="1" y="11" width="6.2" height="3" fill="#fafafa"/><rect x="7.7" y="10.5" width="7.8" height="4" fill="#c4c2c0" stroke="#d8d6d4" stroke-width="1"/></g><g transform="translate(1598,283)"><path d="M.5 0V17.500H18" fill="none" stroke="#484644" stroke-width="1"/><rect x="4" y="11.7" width="3" height="5.3" fill="#fafafa"/><rect x="3.5" y="5.5" width="4" height="5.7" fill="#8ec3f2" stroke="#1976d2" stroke-width="1"/><rect x="12" y="10.7" width="3" height="6.3" fill="#fafafa"/><rect x="11.5" y="2.5" width="4" height="7.7" fill="#c4c2c0" stroke="#d8d6d4" stroke-width="1"/></g><g transform="translate(1626,283)"><path d="M.5 0V17.500H18" fill="none" stroke="#2e2e2e" stroke-width="1"/><rect x="1.1" y="1.1" width="15.6" height="3.1" fill="#8ec3f2" stroke="#1976d2" stroke-width="1"/><rect x="1" y="5.2" width="9.2" height="2.2" fill="#fafafa"/><rect x="1" y="9.3" width="6.8" height="2.7" fill="#c4c2c0"/><rect x="1" y="13" width="11.4" height="2.7" fill="#fafafa"/></g><g transform="translate(1654,283)"><path d="M0 17.500H18" stroke="#484644" stroke-width="1"/><rect x="2" y="1.1" width="3.3" height="15.8" fill="#8ec3f2" stroke="#1976d2" stroke-width="1"/><rect x="5.8" y="7.8" width="2.4" height="9.6" fill="#fafafa"/><rect x="10.2" y="10.2" width="2.8" height="7.2" fill="#c4c2c0"/><rect x="14" y="5.4" width="2.8" height="12" fill="#fafafa"/></g><g transform="translate(1682,283)"><path d="M.5 0V17.500H18" fill="none" stroke="#484644" stroke-width="1"/><rect x="1" y="3.2" width="3" height="2.8" fill="#fafafa"/><rect x="4.5" y="2.5" width="11" height="4" fill="#8ec3f2" stroke="#1976d2" stroke-width="1"/><rect x="1" y="11" width="9.2" height="3" fill="#fafafa"/><rect x="10.7" y="10.7" width="4.8" height="3.6" fill="#c4c2c0" stroke="#d8d6d4" stroke-width="1"/></g><g transform="translate(1710,283)"><path d="M.5 0V17.500H18" fill="none" stroke="#484644" stroke-width="1"/><rect x="4" y="14" width="3" height="3" fill="#fafafa"/><rect x="3.5" y="2.5" width="4" height="11" fill="#8ec3f2" stroke="#1976d2" stroke-width="1"/><rect x="12" y="7.6" width="3" height="9.4" fill="#fafafa"/><rect x="11.5" y="2.5" width="4" height="4.6" fill="#c4c2c0" stroke="#d8d6d4" stroke-width="1"/></g><g transform="translate(1570,311)"><path d="M.5 0V17.500H18" fill="none" stroke="#484644" stroke-width="1"/><path d="M1 9.800L6.500 4.300 11.500 9.800 17.700 3.200" fill="none" stroke="#484644" stroke-width="1"/><path d="M1 13.700L11.500 3.200 17.900 9.800" fill="none" stroke="#2b9be8" stroke-width="1.200"/></g><g transform="translate(1598,311)"><path d="M13.500.4L17.900 8.200V17.500H8z" fill="#c4c2c0"/><path d="M.2 10.900L6.300 2.600 13 11 8 17H.2z" fill="#fafafa"/><path d="M.4 11.200L4.700 15.200 10.700 6.900 17.700 17.400H.4z" fill="#8ec3f2" stroke="#1976d2" stroke-width="1.100" stroke-linejoin="round"/></g><g transform="translate(1626,311)"><path d="M.5 0V17.500" stroke="#484644" stroke-width="1"/><path d="M1 10.200L6 14.800 12.400 8.500 18 13.500V17.500H1z" fill="#fafafa"/><path d="M1 4.100L6 8.200 12.400 2.100 15.200 4.700H18V13.500L12.400 8.500 6 14.800 1 10.200z" fill="#8ec3f2" stroke="#1976d2" stroke-width="1.100" stroke-linejoin="round"/></g><g transform="translate(1654,311)"><path d="M.5 0V17.500H18" stroke="#484644" stroke-width="1" fill="none"/><path d="M1 10.200L6 14.800 12.600 8.500 18 13.700V17H1z" fill="#fafafa"/><path d="M1 2.600H18V13.700L12.600 8.500 6 14.800 1 10.200z" fill="#8ec3f2"/><path d="M1 2.600H18M1 10.200L6 14.800 12.600 8.500 18 13.700" fill="none" stroke="#1976d2" stroke-width="1.100"/></g><g transform="translate(1682,311)"><path d="M.5 0V17.500H18" fill="none" stroke="#484644" stroke-width="1"/><rect x="4" y="13.7" width="3" height="3.3" fill="#fafafa"/><rect x="3.5" y="2.6" width="4" height="10.6" fill="#8ec3f2" stroke="#1976d2" stroke-width="1"/><rect x="12" y="7.2" width="3" height="9.8" fill="#fafafa"/><rect x="11.5" y="2.6" width="4" height="4.1" fill="#c4c2c0" stroke="#d8d6d4" stroke-width="1"/><path d="M1 16.500L6.500 9.100 10.700 12.800 17.900 7.400" fill="none" stroke="#3b3a39" stroke-width="1"/></g><g transform="translate(1710,311)"><path d="M.5 0V17.500H18" fill="none" stroke="#484644" stroke-width="1"/><rect x="3.5" y="8.5" width="3.8" height="8.4" fill="#8ec3f2" stroke="#1976d2" stroke-width="1"/><rect x="7.8" y="1.2" width="3.5" height="16.2" fill="#fafafa"/><rect x="12" y="5" width="3.9" height="12.4" fill="#c4c2c0"/><path d="M1 16.500L6.500 9.100 11.500 12.800 17.900 7.400" fill="none" stroke="#3b3a39" stroke-width="1"/></g><g transform="translate(1570,339)"><path d="M.5 0V17.500H18" fill="none" stroke="#484644" stroke-width="1"/><path d="M2 3.200C5 3.500 6.500 6.800 8.800 6.800S13.500 2.500 17 2V5.500C13.500 6 11.500 10 8.800 10S5 7 2 6.800z" fill="#c4c2c0"/><rect x="2" y="11" width="4.500" height="4" fill="#f08a00"/><rect x="7" y="8" width="3.500" height="3.500" fill="#f08a00"/><rect x="12.500" y="11" width="4.500" height="4" fill="#f08a00"/><path d="M2 8.300C5 8.600 6.200 14 8.800 14S13.500 6.500 17 6" fill="none" stroke="#1976d2" stroke-width="3.600"/><path d="M2 8.300C5 8.600 6.200 14 8.800 14S13.500 6.500 17 6" fill="none" stroke="#8ec3f2" stroke-width="1.300"/></g><g transform="translate(1598,339)"><path d="M.5 0V17.500H18" fill="none" stroke="#484644" stroke-width="1"/><rect x="2.8" y="5.8" width="2.4" height="11.2" fill="#fafafa"/><rect x="7.2" y="5.8" width="2.1" height="4.9" fill="#a19f9d"/><rect x="10" y="1" width="2" height="9.7" fill="#1976d2"/><rect x="14" y="1.9" width="2.2" height="15.1" fill="#fafafa"/></g><g transform="translate(1626,339)"><rect x="0.6" y="1.7" width="17" height="4.5" fill="#8ec3f2" stroke="#1976d2" stroke-width="1"/><rect x="2.6" y="6.7" width="13" height="4.3" fill="#8ec3f2" stroke="#1976d2" stroke-width="1"/><rect x="5.5" y="11.5" width="7" height="5" fill="#8ec3f2" stroke="#1976d2" stroke-width="1"/></g><g transform="translate(1654,339)"><rect x="-2.500" y="-2.500" width="23" height="23" fill="#000" stroke="#fff" stroke-width="1"/><rect x="-.5" y="-.5" width="19" height="19" fill="#141414"/><path d="M.5 1V17.500H17" fill="none" stroke="#484644" stroke-width="1"/><rect x="3" y="4" width="3" height="3" fill="#8ecbff"/><rect x="8" y="7" width="3" height="3" fill="#8ecbff"/><rect x="13" y="11" width="3" height="3" fill="#8ecbff"/><rect x="13" y="1" width="3" height="3" fill="#4a4a4a"/><rect x="3" y="12" width="3" height="3" fill="#4a4a4a"/></g><g transform="translate(1682,339)"><circle cx="9.300" cy="8.700" r="8.600" fill="#fafafa"/><path d="M9.300 8.700L9.30 0.40A8.300 8.300 0 0 1 14.41 15.24z" fill="#8ec3f2" stroke="#1976d2" stroke-width="1.100" stroke-linejoin="round"/></g><g transform="translate(1710,339)"><circle cx="9.100" cy="8.900" r="6.300" fill="none" stroke="#fafafa" stroke-width="5"/><path d="M9.100 2.600A6.300 6.300 0 1 1 2.800 8.900" fill="none" stroke="#1976d2" stroke-width="5"/><path d="M9.100 2.600A6.300 6.300 0 1 1 2.800 8.900" fill="none" stroke="#8ec3f2" stroke-width="3.400"/><path d="M9.600.3V5.200M.3 9.400H5.200" stroke="#1976d2" stroke-width="1"/></g><g transform="translate(1570,367)"><rect x="0.7" y="0.7" width="7.8" height="7.8" fill="#8ec3f2" stroke="#1976d2" stroke-width="1"/><rect x="0.7" y="9.3" width="7.8" height="8" fill="#8ec3f2" stroke="#1976d2" stroke-width="1"/><rect x="9.6" y="0.8" width="8" height="4.2" fill="#fafafa"/><rect x="9.6" y="6" width="2.6" height="11.2" fill="#fafafa"/><rect x="13.2" y="6" width="4.4" height="5" fill="#fafafa"/><rect x="13.2" y="12" width="4.4" height="5.2" fill="#fafafa"/></g><g transform="translate(1598,367)"><path d="M9.500.6A7.600 7.600 0 1 0 15.500 13" fill="none" stroke="#3b3a39" stroke-width="1"/><path d="M10 15.500V17.400M3.500 17.400H16" stroke="#5a5856" stroke-width="1"/><circle cx="10" cy="8" r="5.200" fill="#fff"/><path d="M6 5.500c1-1 2-1.500 3-1.300l-1 2.300-2 2.300c-.5-1-.6-2.200 0-3.300zM11 3.300c2 .2 3.500 1.500 4 3.300l-2.300 1-2-2zM8 10.500l3-1 2.300 1.200-1.500 2.500c-1.800.3-3.200-.8-3.800-2.700z" fill="#1e9e4a"/></g><g transform="translate(1626,367)"><path d="M8.500 2.800L12 3.400 14.500 1.600 17.300 1.800V8H8.500z" fill="#c4c2c0"/><path d="M.8 8H8.700V16.200C5 14.500 2 11.500.8 8z" fill="#c4c2c0"/><path d="M.5 1.200H5.800C7 3.500 7.800 5.800 8 8H.8C1.500 6 1.300 3.500.5 1.200z" fill="#8ec3f2" stroke="#1976d2" stroke-width="1"/><path d="M10.500 8.300H17.700V11C16.500 13.500 14.500 15 12.500 15l-.6 1-1-.6-1.500 1.300-.4-2.700C9.200 12 9.700 10 10.500 8.300z" fill="#8ec3f2" stroke="#1976d2" stroke-width="1"/></g><g transform="translate(1654,367)"><path d="M12.400-1L1 16.600 10 13.500 17 18.700z" fill="#3a9fd8"/><path d="M10 13.500L13 6 17 18.700z" fill="#1976d2"/><path d="M12.400-1L13 6 10 13.500 1 16.600z" fill="#42a5dc"/></g><g transform="translate(1682,367)"><path d="M2.500 13A6.800 6.800 0 0 1 5.400 7.400" fill="none" stroke="#fafafa" stroke-width="4"/><path d="M5.400 7.400A6.800 6.800 0 0 1 16.100 13" fill="none" stroke="#1976d2" stroke-width="4.200"/><path d="M5.800 7.900A6.500 6.500 0 0 1 15.800 12.600" fill="none" stroke="#8ec3f2" stroke-width="2.200"/><path d="M9.300 13.500L13 8" stroke="#4a4846" stroke-width="1.500"/></g><g transform="translate(1710,367)"><rect x="0.8" y="2.8" width="16.4" height="12.4" fill="#fafafa"/><path d="M2.500 13.500H15.500" stroke="#7a7876" stroke-width="1"/><text x="2.200" y="11.500" font-family="Liberation Sans" font-size="8.500" fill="#2b9be8">123</text><g transform="translate(0,-0.3)"><path d="M3.200-1h6l-3.300 5h3.100L-.8 12l3.300-6.300h-3.200z" fill="#f08a00" stroke="#141414" stroke-width="1.200" paint-order="stroke"/><path d="M4-.3h3.500l-3 4.600-2.500 3.400 1.500-3.400h-2z" fill="#ffe08a" opacity=".85"/></g></g><g transform="translate(1570,395)"><rect x="0.8" y="1.7" width="16.4" height="13.3" fill="#fafafa"/><path d="M2 9.800L5.500 4 9 9.800z" fill="#2aa04a"/><path d="M4.300 8.600L5.500 6.500 6.700 8.600z" fill="#a8e0b8"/><path d="M9.500 4H16L12.700 10z" fill="#e0282a"/><path d="M11.500 5.200h2.400L12.700 7.400z" fill="#f8a0a0"/><path d="M2 12.500H16" stroke="#7a7876" stroke-width="1"/></g><g transform="translate(1598,395)"><rect x="1" y="1" width="16" height="2" fill="#c4c2c0"/><rect x="1" y="4.1" width="16" height="12.9" fill="#fafafa"/><rect x="3.5" y="6.5" width="2.5" height="2.5" fill="#c4c2c0" stroke="#7a7876" stroke-width="1"/><rect x="3.5" y="11.5" width="2.5" height="2.5" fill="#c4c2c0" stroke="#7a7876" stroke-width="1"/><g transform="translate(-0.3,-0.5)"><path d="M9 10h10v1.300l-3.700 3.500v4h-2.600v-4L9 11.300z" fill="#fafafa" stroke="#141414" stroke-width="1.600" paint-order="stroke" stroke-linejoin="round"/></g></g><g transform="translate(1626,395)"><rect x="1" y="3.500" width="16" height="13.500" fill="#7a7876"/><rect x="1" y="1" width="16" height="2" fill="#c4c2c0"/><rect x="1" y="4" width="5" height="4" fill="#fafafa"/><rect x="7" y="4" width="4.5" height="4" fill="#fafafa"/><rect x="12.5" y="4" width="4.5" height="4" fill="#fafafa"/><rect x="1" y="9" width="5" height="3.5" fill="#fafafa"/><rect x="7" y="9" width="4.5" height="3.5" fill="#fafafa"/><rect x="12.5" y="9" width="4.5" height="3.5" fill="#fafafa"/><rect x="1" y="13.5" width="5" height="3.5" fill="#fafafa"/><rect x="7" y="13.5" width="4.5" height="3.5" fill="#fafafa"/><rect x="12.5" y="13.5" width="4.5" height="3.5" fill="#fafafa"/></g><g transform="translate(1654,395)"><rect x="1" y="3.500" width="16" height="13.500" fill="#7a7876"/><rect x="11.500" y="3.500" width="5.500" height="13.500" fill="#1976d2"/><rect x="1" y="12.500" width="16" height="4.500" fill="#1976d2"/><rect x="1" y="1" width="16" height="2" fill="#c4c2c0"/><rect x="1" y="4" width="5" height="4" fill="#fafafa"/><rect x="7" y="4" width="4.5" height="4" fill="#fafafa"/><rect x="12.5" y="4" width="4.5" height="4" fill="#8ec3f2"/><rect x="1" y="9" width="5" height="3.5" fill="#fafafa"/><rect x="7" y="9" width="4.5" height="3.5" fill="#fafafa"/><rect x="12.5" y="9" width="4.5" height="3.5" fill="#8ec3f2"/><rect x="1" y="13.5" width="5" height="3.5" fill="#8ec3f2"/><rect x="7" y="13.5" width="4.5" height="3.5" fill="#8ec3f2"/><rect x="12.5" y="13.5" width="4.5" height="3.5" fill="#8ec3f2"/></g><g transform="translate(1682,395)"><text x="2.300" y="14.800" font-family="Liberation Sans" font-size="16.500" fill="#2b9be8">R</text></g><g transform="translate(1710,395)"><text x="-.8" y="12.800" font-family="Liberation Sans" font-size="16.500" letter-spacing="-.8" fill="#2b9be8">Py</text></g><g transform="translate(1570,423)"><path d="M.5 0V17.500H18" fill="none" stroke="#484644" stroke-width="1"/><path d="M1 3.400H13" stroke="#2b9be8" stroke-width="1.200"/><circle cx="14.600" cy="3.400" r="2.400" fill="#8ec3f2" stroke="#1976d2" stroke-width="1"/><path d="M1 8.500H10M1 12.500H6" stroke="#a19f9d" stroke-width="1"/><circle cx="10.700" cy="8.500" r="1.400" fill="#c8c6c4"/><circle cx="6.700" cy="12.500" r="1.400" fill="#c8c6c4"/></g><g transform="translate(1598,423)"><path d="M7 8.500H11M9.300 2.500V14.500M9.300 2.500H11M9.300 14.500H11" fill="none" stroke="#605e5c" stroke-width="1"/><rect x="0.5" y="6.5" width="6" height="3.9" fill="#8ec3f2" stroke="#1976d2" stroke-width="1"/><rect x="11.5" y="0.7" width="5.9" height="3.5" fill="#8ec3f2" stroke="#1976d2" stroke-width="1"/><rect x="11.5" y="6.5" width="5.9" height="3.9" fill="#8ec3f2" stroke="#1976d2" stroke-width="1"/><rect x="11.5" y="12.7" width="5.9" height="3.8" fill="#8ec3f2" stroke="#1976d2" stroke-width="1"/></g><g transform="translate(1626,423)"><path d="M.9 1.700H17.100V12.100H8L3.600 16.800V12.100H.9z" fill="#fafafa" stroke="#1976d2" stroke-width="1.200" stroke-linejoin="miter"/></g><g transform="translate(1654,423)"><path d="M2.800.8H10.500L15.200 5.500V17H2.800z" fill="#fafafa"/><path d="M10.500.8V5.500H15.200" fill="none" stroke="#3b3a39" stroke-width="1"/><path d="M7 8.500H12.500M5 11.500H10.500" stroke="#1976d2" stroke-width="1.100"/><circle cx="3" cy="7" r="2.300" fill="#1976d2" stroke="#141414" stroke-width="1.200"/><circle cx="3" cy="7" r="1" fill="#8ec3f2"/></g><g transform="translate(1682,423)"><path d="M4 1.500H1.300c0 4 1 6.500 4 7.500M14 1.500h2.700c0 4-1 6.500-4 7.500" fill="none" stroke="#4a4846" stroke-width="1"/><path d="M5 3H13V8c0 2.500-1.500 4.200-3 4.500v1l2 1.500H6l2-1.500v-1C6.500 12.200 5 10.500 5 8z" fill="#fafafa"/><rect x="4.4" y="0.7" width="9.1" height="1.8" fill="#8ec3f2" stroke="#1976d2" stroke-width="1"/><rect x="4.4" y="15.5" width="9.1" height="1.9" fill="#8ec3f2" stroke="#1976d2" stroke-width="1"/></g><g transform="translate(1710,423)"><path d="M1.700 0H11L15.500 4.500V18H1.700z M11 0V4.500H15.500" fill="none" stroke="#3b3a39" stroke-width="1"/><path d="M4.500 16V11M8 16V13.500M11.500 16V8.500" stroke="#3b3a39" stroke-width="2"/></g><g transform="translate(1570,451)"><rect x="1" y="1" width="7" height="7" fill="#1976d2"/><rect x="10" y="0" width="7" height="8" fill="#fafafa"/><rect x="1" y="10" width="7" height="7" fill="#fafafa"/><g transform="translate(-0.3,-0.5)"><path d="M9 10h10v1.300l-3.700 3.500v4h-2.600v-4L9 11.300z" fill="#fafafa" stroke="#141414" stroke-width="1.600" paint-order="stroke" stroke-linejoin="round"/></g><g transform="translate(0,0)"><path d="M3.200-1h6l-3.300 5h3.100L-.8 12l3.300-6.300h-3.200z" fill="#f08a00" stroke="#141414" stroke-width="1.200" paint-order="stroke"/><path d="M4-.3h3.500l-3 4.600-2.500 3.400 1.500-3.400h-2z" fill="#ffe08a" opacity=".85"/></g></g><g transform="translate(1598,451)"><path d="M1 17V9L8 1H17V17z" fill="#fafafa"/><path d="M5.500 14L9.500 4.500 11.500 10M7 10.500H10.500" fill="none" stroke="#2b9be8" stroke-width="1.100"/><g transform="translate(-0.3,-0.5)"><path d="M9 10h10v1.300l-3.700 3.500v4h-2.600v-4L9 11.300z" fill="#fafafa" stroke="#141414" stroke-width="1.600" paint-order="stroke" stroke-linejoin="round"/></g><g transform="translate(0,0)"><path d="M3.200-1h6l-3.300 5h3.100L-.8 12l3.300-6.300h-3.200z" fill="#f08a00" stroke="#141414" stroke-width="1.200" paint-order="stroke"/><path d="M4-.3h3.500l-3 4.600-2.500 3.400 1.500-3.400h-2z" fill="#ffe08a" opacity=".85"/></g></g><g transform="translate(1626,451)"><path d="M1 17V9L8 1H17V17z" fill="#fafafa"/><path d="M8 6H15.500" stroke="#7a7876" stroke-width="1"/><rect x="3.500" y="10.500" width="2.500" height="2.500" fill="none" stroke="#7a7876" stroke-width="1"/><g transform="translate(-0.3,-0.5)"><path d="M9 10h10v1.300l-3.700 3.500v4h-2.600v-4L9 11.300z" fill="#fafafa" stroke="#141414" stroke-width="1.600" paint-order="stroke" stroke-linejoin="round"/></g><g transform="translate(0,0)"><path d="M3.200-1h6l-3.300 5h3.100L-.8 12l3.300-6.300h-3.200z" fill="#f08a00" stroke="#141414" stroke-width="1.200" paint-order="stroke"/><path d="M4-.3h3.500l-3 4.600-2.500 3.400 1.500-3.400h-2z" fill="#ffe08a" opacity=".85"/></g></g><g transform="translate(1654,451)"><rect x="1" y="3.2" width="16.2" height="11.8" fill="#fafafa"/><path d="M1 11.500L5.500 6.700 10.800 12.300 13.500 9.700 17.200 13.300V15H1z" fill="#8ec3f2"/><path d="M1 11.500L5.500 6.700 13.500 15M11 12.300L13.500 9.700 17.200 13.300" fill="none" stroke="#1976d2" stroke-width="1"/><circle cx="13.500" cy="5.700" r="1.400" fill="#f08a00"/></g><g transform="translate(1682,451)"><path d="M3 1H17.500V8.500H14.500V4H7V15H12.500V17.500H3z" fill="#8ec3f2" stroke="#1976d2" stroke-width="1" stroke-linejoin="round"/><path d="M16.500 4.500C14 4 12.500 5 12.800 7 13 8.500 11.500 8.500 10.500 9.500 9 11 10.500 13 9 15L12.500 15.500C12 13 13 12 14 10.500 15 9 14.500 8 16 7z" fill="#8ec3f2"/><path d="M.8 1.800C.8 0 2.200-1 3.900-1S7 0 7 1.800V6.500L3.900 10 .8 6.500z" fill="#f08a00"/><circle cx="3.900" cy="2.800" r="1.100" fill="#141414"/><circle cx="17.400" cy="10.400" r="1.600" fill="#f08a00"/><circle cx="15.500" cy="15.500" r="2.700" fill="#f08a00"/></g><g transform="translate(1710,451)"><path d="M.5 9L8 1.500C8.800.7 9.600.7 10.400 1.500L17.800 9 10.400 16.500C9.600 17.300 8.800 17.300 8 16.500z" fill="#fff" stroke="#a23aa8" stroke-width="1.100"/><path d="M7 2.500C6.300 3.500 6.300 4.500 7 5.200L10.800 9 7 12.800C6.300 13.500 6.300 14.500 7 15.500M13.700 5L6.500 12.200M10.800 9L14.200 12.400" fill="none" stroke="#a23aa8" stroke-width="1.100"/></g><g transform="translate(1570,479)"><path d="M.7 1.500H12L17.500 8.500 12 15.500H.7L6.500 8.500z" fill="#fff" stroke="#1a8cff" stroke-width="1.200" stroke-linejoin="round"/><path d="M11.800 1.800L1.200 15.200M15 5.800L6.800 15.200" stroke="#1a8cff" stroke-width="1.100"/></g></svg>
<div class="a" style="left:1733.4px;top:519px;width:5.6px;height:424px;background:#a4a4a4;border-radius:3px;"></div>
<div class="t" style="left:1571.00px;top:527.00px;font-size:12px;color:#fff;letter-spacing:-0.362px;">Values</div>
<div class="t" style="left:1571.00px;top:587.00px;font-size:12px;color:#fff;letter-spacing:-0.390px;">X Axis</div>
<div class="t" style="left:1571.00px;top:656.00px;font-size:12px;color:#fff;letter-spacing:-0.347px;">Y Axis</div>
<div class="t" style="left:1571.00px;top:716.00px;font-size:12px;color:#fff;letter-spacing:-0.291px;">Legend</div>
<div class="t" style="left:1571.00px;top:776.00px;font-size:12px;color:#fff;letter-spacing:-0.783px;">Size</div>
<div class="t" style="left:1571.00px;top:836.00px;font-size:12px;color:#fff;letter-spacing:-0.337px;">Play Axis</div>
<div class="t" style="left:1571.00px;top:896.00px;font-size:12px;color:#fff;letter-spacing:0.042px;">Tooltips</div>
<div class="a" style="left:1563px;top:546px;width:170px;height:28px;border:1px dashed #666;border-radius:3px;"></div>
<div class="t" style="left:1574.20px;top:555.00px;font-size:12px;color:#fff;letter-spacing:-0.014px;">Add data fields here</div>
<div class="a" style="left:1563px;top:735px;width:170px;height:28px;border:1px dashed #666;border-radius:3px;"></div>
<div class="t" style="left:1574.20px;top:744.00px;font-size:12px;color:#fff;letter-spacing:-0.014px;">Add data fields here</div>
<div class="a" style="left:1563px;top:795px;width:170px;height:28px;border:1px dashed #666;border-radius:3px;"></div>
<div class="t" style="left:1574.20px;top:804.00px;font-size:12px;color:#fff;letter-spacing:-0.014px;">Add data fields here</div>
<div class="a" style="left:1563px;top:855px;width:170px;height:28px;border:1px dashed #666;border-radius:3px;"></div>
<div class="t" style="left:1574.20px;top:864.00px;font-size:12px;color:#fff;letter-spacing:-0.014px;">Add data fields here</div>
<div class="a" style="left:1563px;top:915px;width:170px;height:28px;border:1px dashed #666;border-radius:3px;"></div>
<div class="t" style="left:1574.20px;top:924.00px;font-size:12px;color:#fff;letter-spacing:-0.014px;">Add data fields here</div>
<div class="a" style="left:1563px;top:606px;width:170px;height:37px;border:1px dashed #666;border-radius:3px;"></div>
<div class="a" style="left:1566px;top:610px;width:164px;height:23px;background:#1f1f1f;border:1px solid #7a7a7a;border-radius:3px;"></div>
<div class="t" style="left:1571.00px;top:616.00px;font-size:12px;color:#fff;letter-spacing:-0.100px;">Category</div>
<svg style="left:1690px;top:610px;" width="40" height="24" viewBox="1690 610 40 24"><path d="M1700.800 619.300l4.100 4.100 4.100-4.100" fill="none" stroke="#fff" stroke-width="1.300" stroke-linecap="round" stroke-linejoin="round"/><path d="M1718.200 618.500l5.600 5.600M1723.800 618.500l-5.600 5.600" stroke="#fff" stroke-width="1.100"/></svg>
<div class="a" style="left:1563px;top:675px;width:170px;height:28px;border:1px dashed #666;border-radius:3px;"></div>
<div class="t" style="left:1574.20px;top:684.00px;font-size:12px;color:#fff;letter-spacing:-0.014px;">Add data fields here</div>
<div class="a" style="left:1557px;top:686px;width:170px;height:24px;background:rgba(46,46,46,.75);border-radius:4px;"></div>
<div class="a" style="left:1557px;top:686px;width:3.5px;height:24px;background:#6e6e6e;border-radius:3px 0 0 3px;"></div>
<div class="a" style="left:1596px;top:692.3px;width:12px;height:11.7px;border:1px solid #9c9c9c;border-radius:2px;"></div>
<div class="t" style="left:1634.00px;top:693.00px;font-size:12.5px;color:#d8d8d8;letter-spacing:-0.531px;">Currency</div>
<div class="a" style="left:1714.8px;top:697.2px;width:2.2px;height:2.2px;background:#e8e8e8;border-radius:1.100px;"></div>
<div class="a" style="left:1717.8px;top:697.2px;width:2.2px;height:2.2px;background:#e8e8e8;border-radius:1.100px;"></div>
<div class="a" style="left:1720.8px;top:697.2px;width:2.2px;height:2.2px;background:#e8e8e8;border-radius:1.100px;"></div>
<div class="t" style="left:1571.00px;top:956.00px;font-size:12px;color:#fff;letter-spacing:-0.168px;font-weight:bold;">Drill through</div>
<div class="t" style="left:1571.00px;top:981.00px;font-size:12px;color:#fff;letter-spacing:0.028px;">Cross-report</div>
<div class="a" style="left:1685px;top:979px;width:32px;height:16px;border:1px solid #d0d0d0;border-radius:8px;"></div>
<div class="a" style="left:1689.7px;top:983.2px;width:8px;height:8px;background:#b0b0b0;border-radius:4px;"></div>
<div class="t" style="left:1699.70px;top:983.00px;font-size:10px;color:#c8c8c8;letter-spacing:0.024px;">Off</div>
<!-- p_data -->
<div class="t" style="left:1749.00px;top:182.00px;font-size:16px;color:#fff;letter-spacing:-0.727px;font-weight:bold;">Data</div>
<div class="a" style="left:1745px;top:215px;width:171px;height:24px;background:#292929;border:1px solid #8a8886;border-radius:4px;"></div>
<div class="t" style="left:1778.50px;top:220.00px;font-size:14px;color:#9a9a9a;letter-spacing:-0.672px;">Search</div>
<div class="t" style="left:1787.50px;top:255.00px;font-size:12.5px;color:#fff;letter-spacing:-0.401px;will-change:transform;-webkit-text-stroke:.2px #fff;">DumboData</div>
<div class="a" style="left:1745px;top:320px;width:170px;height:24px;background:#292929;border-radius:4px;"></div>
<div class="a" style="left:1745px;top:320px;width:4px;height:24px;background:#8a8a8a;border-radius:3px 0 0 3px;"></div>
<div class="t" style="left:1822.30px;top:279.00px;font-size:12.5px;color:#fff;letter-spacing:-0.116px;will-change:transform;-webkit-text-stroke:.2px #fff;">Amount</div>
<div class="t" style="left:1822.30px;top:303.00px;font-size:12.5px;color:#fff;letter-spacing:-0.318px;will-change:transform;-webkit-text-stroke:.2px #fff;">Category</div>
<div class="t" style="left:1822.30px;top:327.00px;font-size:12.5px;color:#fff;letter-spacing:-0.531px;will-change:transform;-webkit-text-stroke:.2px #fff;">Currency</div>
<div class="t" style="left:1822.00px;top:351.00px;font-size:12.5px;color:#fff;letter-spacing:-0.635px;will-change:transform;-webkit-text-stroke:.2px #fff;">Date</div>
<div class="t" style="left:1822.30px;top:375.00px;font-size:12.5px;color:#fff;letter-spacing:-0.414px;will-change:transform;-webkit-text-stroke:.2px #fff;">Notes</div>
<div class="t" style="left:1822.30px;top:399.00px;font-size:12.5px;color:#fff;letter-spacing:-0.455px;will-change:transform;-webkit-text-stroke:.2px #fff;">Owner</div>
<div class="t" style="left:1822.30px;top:423.00px;font-size:12.5px;color:#fff;letter-spacing:-0.614px;will-change:transform;-webkit-text-stroke:.2px #fff;">RecordID</div>
<div class="t" style="left:1822.30px;top:447.00px;font-size:12.5px;color:#fff;letter-spacing:-0.423px;will-change:transform;-webkit-text-stroke:.2px #fff;">Region</div>
<div class="t" style="left:1822.30px;top:471.00px;font-size:12.5px;color:#fff;letter-spacing:-0.688px;will-change:transform;-webkit-text-stroke:.2px #fff;">Status</div>
<div class="t" style="left:1822.30px;top:495.00px;font-size:12.5px;color:#fff;letter-spacing:-0.369px;will-change:transform;-webkit-text-stroke:.2px #fff;">Subcategory</div>
<svg style="left:1740px;top:170px;" width="180" height="360" viewBox="1740 170 180 360"><path d="M1902 185.500l3.500 3.700-3.500 3.700M1905.500 185.500l3.500 3.700-3.500 3.700" fill="none" stroke="#fff" stroke-width="1.400"/><circle cx="1762.300" cy="225.700" r="6.200" fill="none" stroke="#c8c8c8" stroke-width="1"/><path d="M1766.800 230.200l4 3.700" stroke="#c8c8c8" stroke-width="1.100" stroke-linecap="round"/><path d="M1755 258.300l4 4 4-4" fill="none" stroke="#e0e0e0" stroke-width="1.200" stroke-linecap="round" stroke-linejoin="round"/><rect x="1769.500" y="254.500" width="11" height="11" rx="2" fill="none" stroke="#e8e8e8" stroke-width="1"/><path d="M1769.500 258.200h11M1769.500 261.800h11M1773.200 254.500v11M1776.800 254.500v11" stroke="#e8e8e8" stroke-width="1"/><circle cx="1781" cy="265.800" r="5.600" fill="#0f7a63" stroke="#141414" stroke-width=".8"/><path d="M1778.600 265.900l1.700 1.700 3.100-3.300" fill="none" stroke="#fff" stroke-width="1.200" stroke-linecap="round" stroke-linejoin="round"/><rect x="1784.5" y="278.5" width="11" height="11" rx="1.800" fill="none" stroke="#c8c8c8" stroke-width="1"/><rect x="1784" y="302" width="12" height="12" rx="2" fill="#2ebb98"/><path d="M1786.4 308.3l2.600 2.600 4.600-5" fill="none" stroke="#0c5a48" stroke-width="1.100"/><rect x="1784.5" y="326.5" width="11" height="11" rx="1.800" fill="none" stroke="#c8c8c8" stroke-width="1"/><rect x="1784.5" y="350.5" width="11" height="11" rx="1.800" fill="none" stroke="#c8c8c8" stroke-width="1"/><rect x="1784.5" y="374.5" width="11" height="11" rx="1.800" fill="none" stroke="#c8c8c8" stroke-width="1"/><rect x="1784.5" y="398.5" width="11" height="11" rx="1.800" fill="none" stroke="#c8c8c8" stroke-width="1"/><rect x="1784.5" y="422.5" width="11" height="11" rx="1.800" fill="none" stroke="#c8c8c8" stroke-width="1"/><rect x="1784.5" y="446.5" width="11" height="11" rx="1.800" fill="none" stroke="#c8c8c8" stroke-width="1"/><rect x="1784.5" y="470.5" width="11" height="11" rx="1.800" fill="none" stroke="#c8c8c8" stroke-width="1"/><rect x="1784.5" y="494.5" width="11" height="11" rx="1.800" fill="none" stroke="#c8c8c8" stroke-width="1"/><path d="M1812.800 281v-1.800h-8l4.300 5.300-4.300 5.300h8v-1.800" fill="none" stroke="#e8e8e8" stroke-width="1.100" stroke-linejoin="round"/><path d="M1772.300 352.500l4 4-4 4" fill="none" stroke="#e0e0e0" stroke-width="1.200" stroke-linecap="round" stroke-linejoin="round"/><rect x="1804.500" y="351" width="11" height="11" rx="2" fill="none" stroke="#e8e8e8" stroke-width="1"/><path d="M1804.500 354.500h11" stroke="#e8e8e8" stroke-width="1"/><rect x="1806.7" y="356.4" width="1.300" height="1.300" fill="#e8e8e8"/><rect x="1806.7" y="359.1" width="1.300" height="1.300" fill="#e8e8e8"/><rect x="1809.4" y="356.4" width="1.300" height="1.300" fill="#e8e8e8"/><rect x="1809.4" y="359.1" width="1.300" height="1.300" fill="#e8e8e8"/><rect x="1812.1" y="356.4" width="1.300" height="1.300" fill="#e8e8e8"/><rect x="1812.1" y="359.1" width="1.300" height="1.300" fill="#e8e8e8"/><circle cx="1903.8" cy="332.300" r=".9" fill="#fff"/><circle cx="1906.8" cy="332.300" r=".9" fill="#fff"/><circle cx="1909.8" cy="332.300" r=".9" fill="#fff"/></svg>
<!-- p_bottom -->
<div class="a" style="left:40px;top:972px;width:1px;height:35px;background:#4a4a4a;"></div>
<svg style="left:41px;top:972px;" width="300" height="36" viewBox="41 972 300 36"><rect x="55.800" y="980" width="14.600" height="11.200" rx="1.800" fill="none" stroke="#ffffff" stroke-width="1.600"/><path d="M58.500 994.500h9M61 991.500v3M65 991.500v3" stroke="#ffffff" stroke-width="1.400"/><rect x="51" y="1000.500" width="24" height="3" rx="1.500" fill="#2ebb98"/><rect x="102.300" y="979" width="9.200" height="16.200" rx="2" fill="none" stroke="#ffffff" stroke-width="1.600"/><path d="M105 992.500h3.500" stroke="#ffffff" stroke-width="1.200"/><path d="M139.800 986.500l-4.300 3.800 4.300 3.800z" fill="none" stroke="#b8b8b8" stroke-width="1"/><path d="M156.500 986.500l4.300 3.800-4.300 3.800z" fill="none" stroke="#b8b8b8" stroke-width="1"/></svg>
<div class="a" style="left:168px;top:972px;width:1px;height:36px;background:#141414;"></div>
<div class="a" style="left:169px;top:972px;width:76px;height:36px;background:#292929;"></div>
<div class="a" style="left:169px;top:1003px;width:75px;height:4px;background:#2ebb98;"></div>
<div class="a" style="left:244px;top:972px;width:1px;height:36px;background:#141414;"></div>
<div class="t" style="left:189.40px;top:985.00px;font-size:12.5px;color:#fff;letter-spacing:-1.261px;font-weight:bold;">Page 1</div>
<div class="a" style="left:245px;top:972px;width:39px;height:35px;background:#2aab8e;"></div>
<svg style="left:258px;top:983px;" width="12" height="12" viewBox="0 0 12 12"><path d="M6 1v10M1 6h10" stroke="#1b1b1b" stroke-width="2.400"/></svg>
<div class="t" style="left:4.40px;top:1014.00px;font-size:13px;color:#ececec;letter-spacing:-0.851px;">Page 1 of 1</div>
<svg style="left:1700px;top:1008px;" width="220" height="24" viewBox="1700 1008 220 24"><rect x="1708" y="1019" width="4.800" height="1.800" fill="#fff"/><rect x="1717.500" y="1019" width="99.500" height="1.300" fill="#e0e0e0"/><rect x="1766" y="1014" width="4" height="11" fill="#dcdcdc"/><path d="M1823.300 1019.600h7.400M1827 1015.900v7.400" stroke="#fff" stroke-width="1.200"/><rect x="1887.500" y="1015.500" width="13" height="9" rx="1.500" fill="none" stroke="#fff" stroke-width="1.200"/><path d="M1892.800 1017.800h-2.600v4.400h2.600M1895.700 1017.800h2.600v4.400h-2.600" fill="none" stroke="#fff" stroke-width="1"/></svg>
<div class="t" style="left:1845.00px;top:1014.00px;font-size:12.5px;color:#fff;letter-spacing:-1.324px;">103%</div>
</body>
</html>
